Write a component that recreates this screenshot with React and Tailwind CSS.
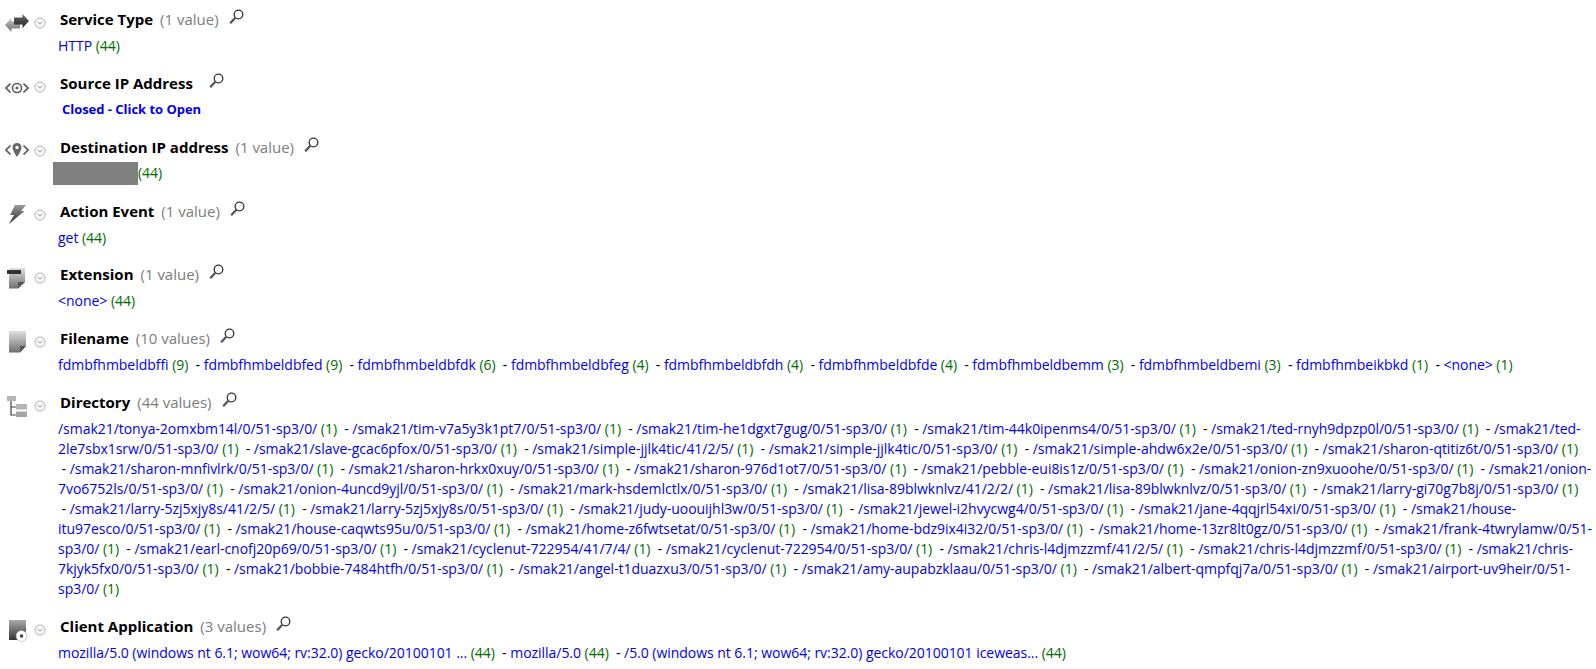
import React from "react";

const S = "/0/51-sp3/0/";
const dirs = [
  "tonya-2omxbm14l" + S, "tim-v7a5y3k1pt7" + S, "tim-he1dgxt7gug" + S, "tim-44k0ipenms4" + S, "ted-rnyh9dpzp0l" + S,
  "ted-2le7sbx1srw" + S, "slave-gcac6pfox" + S, "simple-jjlk4tic/41/2/5/", "simple-jjlk4tic" + S, "simple-ahdw6x2e" + S, "sharon-qtitiz6t" + S,
  "sharon-mnfivlrk" + S, "sharon-hrkx0xuy" + S, "sharon-976d1ot7" + S, "pebble-eui8is1z" + S, "onion-zn9xuoohe" + S,
  "onion-7vo6752ls" + S, "onion-4uncd9yjl" + S, "mark-hsdemlctlx" + S, "lisa-89blwknlvz/41/2/2/", "lisa-89blwknlvz" + S, "larry-gi70g7b8j" + S,
  "larry-5zj5xjy8s/41/2/5/", "larry-5zj5xjy8s" + S, "judy-uoouijhl3w" + S, "jewel-i2hvycwg4" + S, "jane-4qqjrl54xi" + S,
  "house-itu97esco" + S, "house-caqwts95u" + S, "home-z6fwtsetat" + S, "home-bdz9ix4i32" + S, "home-13zr8lt0gz" + S, "frank-4twrylamw" + S,
  "earl-cnofj20p69" + S, "cyclenut-722954/41/7/4/", "cyclenut-722954" + S, "chris-l4djmzzmf/41/2/5/", "chris-l4djmzzmf" + S,
  "chris-7kjyk5fx0" + S, "bobbie-7484htfh" + S, "angel-t1duazxu3" + S, "amy-aupabzklaau" + S, "albert-qmpfqj7a" + S, "airport-uv9heir" + S,
].map((d) => ["/smak21/" + d, 1]);

const files = [
  ["fdmbfhmbeldbffi", 9], ["fdmbfhmbeldbfed", 9], ["fdmbfhmbeldbfdk", 6], ["fdmbfhmbeldbfeg", 4], ["fdmbfhmbeldbfdh", 4],
  ["fdmbfhmbeldbfde", 4], ["fdmbfhmbeldbemm", 3], ["fdmbfhmbeldbemi", 3], ["fdmbfhmbeikbkd", 1], ["<none>", 1],
];

const grad = (id, a = "#e0e0e0", b = "#6e6e6e") => (
  <linearGradient id={id} x1="0" y1="0" x2="0" y2="1">
    <stop offset="0" stopColor={a} />
    <stop offset="1" stopColor={b} />
  </linearGradient>
);

const Arrows = () => (
  <svg width="24" height="18" viewBox="0 0 24 18" className="mt-[2px]">
    <defs>
      {grad("g1", "#c4c4c4", "#707070")}
      {grad("g5", "#6a6a6a", "#222")}
    </defs>
    <path d="M0 11 L6.500 4 V7.500 H15 V14.500 H6.500 V18 Z" fill="url(#g1)" />
    <path d="M24 7 L17.500 0 V3.500 H9 V10.500 H17.500 V14 Z" fill="url(#g5)" />
  </svg>
);
const Bracket = ({ pin }) => (
  <svg width="24" height="14" viewBox="0 0 24 14" className={pin ? "mt-[1px]" : "mt-[5px]"}>
    <path d="M5.500 2.500 L1 7 L5.500 11.500 M18.500 2.500 L23 7 L18.500 11.500" fill="none" stroke="#555" strokeWidth="1.600" />
    {pin ? (
      <path d="M12 0 a4.500 4.500 0 0 1 4.500 4.500 c0 3 -4.500 9.500 -4.500 9.500 s-4.500 -6.500 -4.500 -9.500 a4.500 4.500 0 0 1 4.500 -4.500 Z M12 2.800 a1.700 1.700 0 1 0 .01 0 Z" fill="#666" fillRule="evenodd" />
    ) : (
      <>
        <circle cx="12" cy="7" r="4.500" fill="none" stroke="#555" strokeWidth="1.500" />
        <circle cx="12" cy="7" r="1.600" fill="#666" />
      </>
    )}
  </svg>
);
const Bolt = () => (
  <svg width="17" height="19" viewBox="0 0 17 19" className="mt-[2px]">
    <defs>{grad("g6", "#9a9a9a", "#2c2c2c")}</defs>
    <path d="M6 0 H17 L12 6 H15.500 L0 19 L5 10 H1 Z" fill="url(#g6)" />
  </svg>
);
const Page = ({ id, band }) => (
  <svg width="19" height="22" viewBox="0 0 19 22" className="mt-[2px]">
    <defs>{grad(id)}</defs>
    <path d={band ? "M2 1 H18 V15 L11 21.500 H2 Z" : "M0 0 H17 V15 L11 21.500 H0 Z"} fill={`url(#${id})`} />
    <path d={band ? "M18 15 H11 V21.500 Z" : "M17 15 H11 V21.500 Z"} fill="#555" />
    {band && <rect x="0" y="3" width="14" height="4" fill="#333" />}
  </svg>
);
const Tree = () => (
  <svg width="20" height="21" viewBox="0 0 20 21" className="mt-[2px]">
    <path d="M4 5 V19 H10 M4 11 H10" fill="none" stroke="#444" strokeWidth="1.200" />
    <rect x="0" y="0" width="9" height="5" fill="#b5b5b5" />
    <rect x="9" y="8" width="11" height="5.500" fill="#b5b5b5" />
    <rect x="9" y="15.500" width="11" height="5.500" fill="#a5a5a5" />
  </svg>
);
const Disc = () => (
  <svg width="19" height="22" viewBox="0 0 19 22" className="mt-[5px]">
    <defs>{grad("g4", "#aaa", "#333")}</defs>
    <rect x="0" y="0" width="17" height="20" fill="url(#g4)" />
    <circle cx="12.500" cy="16" r="5.500" fill="#fff" stroke="#999" strokeWidth=".5" />
    <circle cx="12.500" cy="16" r="1.800" fill="#444" />
  </svg>
);
const Chevron = () => (
  <svg width="12" height="12" viewBox="0 0 12 12">
    <circle cx="6" cy="6" r="5" fill="#fafafa" stroke="#b5b5b5" />
    <path d="M3.700 4.800 L6 7.200 L8.300 4.800" fill="none" stroke="#999" strokeWidth="1" />
  </svg>
);
const Search = () => (
  <svg width="15" height="16" viewBox="0 0 15 16">
    <circle cx="9.500" cy="5.500" r="4.300" fill="none" stroke="#333" strokeWidth="1.300" />
    <path d="M6.300 8.700 L1.200 14.300" stroke="#555" strokeWidth="2.200" />
  </svg>
);

const Items = ({ items }) =>
  items.map(([t, c], i) => (
    <React.Fragment key={i}>
      {i > 0 && "\u00a0-\u2060\u00a0"}
      <span className="text-[#0000ee]">{t}</span>{"\u00a0"}<span className="text-[#006b00]">({c})</span>{" "}
    </React.Fragment>
  ));

function Section({ icon, iconClass, title, count, gap, children }) {
  return (
    <section className="pb-[14.850px]">
      <div className="flex h-[29px] items-start">
        <div className={`w-[34px] h-[30px] flex flex-none items-center ${iconClass}`}>{icon}</div>
        <div className="mt-[10px] w-[26px] flex-none">
          <Chevron />
        </div>
        <h2 className="text-[15px] leading-[24px] font-bold text-black">{title}</h2>
        {count && <span className="ml-[7px] text-[15px] leading-[24px] text-[#7d7d7d]">{count}</span>}
        <span className={`mt-[2px] ${gap}`}>
          <Search />
        </span>
      </div>
      <div className="pl-[58px] text-[14px] leading-[20px] tracking-[-0.035px]">{children}</div>
    </section>
  );
}

export default function App() {
  return (
    <main className="w-[1596px] min-h-[669px] bg-white pt-[7px] font-['Open_Sans',sans-serif] overflow-hidden">
      <Section icon={<Arrows />} iconClass="pl-[5px]" title="Service Type" count="(1 value)" gap="ml-[10px]">
        <Items items={[["HTTP", 44]]} />
      </Section>
      <Section icon={<Bracket />} iconClass="pl-[5px]" title="Source IP Address" gap="ml-[16px]">
        <div className="h-[20px] pl-[4px] text-[13px] leading-[18px] font-bold text-[#0000ee]">Closed - Click to Open</div>
      </Section>
      <Section icon={<Bracket pin />} iconClass="pl-[5px]" title="Destination IP address" count="(1 value)" gap="ml-[10px]">
        <div className="flex h-[20px] -ml-[5px]">
          <span className="h-[23px] w-[85px] -mt-[1.500px] bg-[#808080]" />
          <span className="leading-[18px] text-[#006b00]">(44)</span>
        </div>
      </Section>
      <Section icon={<Bolt />} iconClass="pl-[9px]" title="Action Event" count="(1 value)" gap="ml-[10px]">
        <Items items={[["get", 44]]} />
      </Section>
      <Section icon={<Page id="g2" band />} iconClass="pl-[7px]" title="Extension" count="(1 value)" gap="ml-[10px]">
        <Items items={[["<none>", 44]]} />
      </Section>
      <Section icon={<Page id="g3" />} iconClass="pl-[9px]" title="Filename" count="(10 values)" gap="ml-[10px]">
        <Items items={files} />
      </Section>
      <Section icon={<Tree />} iconClass="pl-[7px]" title="Directory" count="(44 values)" gap="ml-[10px]">
        <Items items={dirs} />
      </Section>
      <Section icon={<Disc />} iconClass="pl-[9px]" title="Client Application" count="(3 values)" gap="ml-[10px]">
        <Items
          items={[
            ["mozilla/5.0 (windows nt 6.1; wow64; rv:32.0) gecko/20100101 ...", 44],
            ["mozilla/5.0", 44],
            ["/5.0 (windows nt 6.1; wow64; rv:32.0) gecko/20100101 iceweas...", 44],
          ]}
        />
      </Section>
    </main>
  );
}
